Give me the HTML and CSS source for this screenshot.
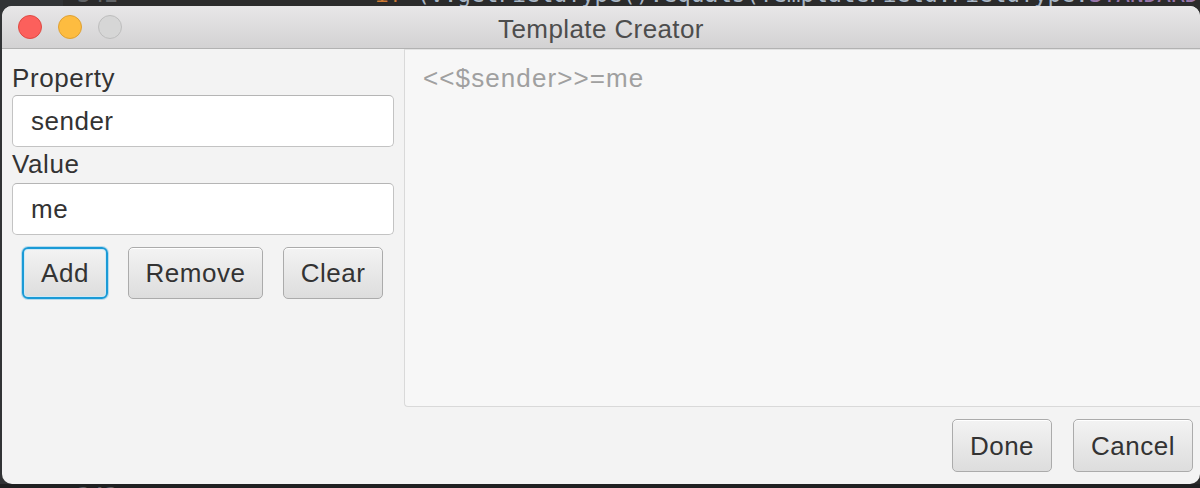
FILE: index.html
```html
<!DOCTYPE html>
<html lang="en">
<head>
<meta charset="utf-8">
<title>Template Creator</title>
<link rel="stylesheet" href="styles.css">
</head>
<body>
<div class="editor" aria-hidden="true">
  <div class="gutter"></div>
  <div class="code-top"><span class="ln">342</span><span class="kw">if</span> <span class="code">(v.getFieldType().equals(TemplateField.FieldType.</span><span class="const">STANDARD</span></div>
  <div class="code-bottom"><span class="ln ln-bottom">343</span></div>
</div>

<div class="window">
  <div class="titlebar">
    <div class="lights">
      <span class="light red"></span>
      <span class="light yellow"></span>
      <span class="light gray"></span>
    </div>
    <div class="title">Template Creator</div>
    <div></div>
  </div>
  <div class="content">
    <div class="left">
      <div class="label">Property</div>
      <div class="field">sender</div>
      <div class="label label-second">Value</div>
      <div class="field field-second">me</div>
      <div class="actions">
        <button class="btn btn-add">Add</button>
        <button class="btn btn-remove">Remove</button>
        <button class="btn btn-clear">Clear</button>
      </div>
    </div>
    <div class="right">
      <div class="textarea">&lt;&lt;$sender&gt;&gt;=me</div>
      <div class="footer">
        <button class="btn btn-done">Done</button>
        <button class="btn btn-cancel">Cancel</button>
      </div>
    </div>
  </div>
</div>
</body>
</html>
```

FILE: styles.css
```css
* { box-sizing: border-box; }

html, body {
  margin: 0;
  height: 100%;
}

body {
  position: relative;
  overflow: hidden;
  background: #2b2b2b;
  font-family: "Liberation Sans", Arial, sans-serif;
}

/* background IDE behind the dialog */
.editor {
  position: absolute;
  inset: 0;
  z-index: 0;
}

.gutter {
  position: absolute;
  left: 0;
  top: 0;
  bottom: 0;
  width: 63px;
  background: #313335;
}

.code-top {
  position: absolute;
  top: -18px;
  left: 77px;
  font: 22.8px/24px "DejaVu Sans Mono", monospace;
  white-space: pre;
  color: #a9b7c6;
}

.ln {
  display: inline-block;
  width: 298px;
  color: #606366;
}

.kw { color: #cc7832; }
.const { color: #9876aa; }

.code-bottom {
  position: absolute;
  top: 484px;
  left: 0;
  right: 0;
  bottom: 0;
  background: #1f2021;
  overflow: hidden;
}

.ln-bottom {
  position: relative;
  top: 0;
  left: 77px;
  font: 22.8px/24px "DejaVu Sans Mono", monospace;
}

/* dialog window */
.window {
  position: relative;
  z-index: 1;
  margin: 6px 0 0 2px;
  width: 1198px;
  height: 478px;
  border-radius: 10px;
  overflow: hidden;
  background: #f3f3f3;
  display: flex;
  flex-direction: column;
}

.titlebar {
  height: 43px;
  flex: none;
  display: grid;
  grid-template-columns: 1fr auto 1fr;
  align-items: center;
  background: linear-gradient(#e8e7e8, #d3d2d3);
  border-bottom: 1px solid #b2b2b2;
}

.lights {
  display: flex;
  gap: 16px;
  padding-left: 16px;
  align-items: center;
}

.light {
  width: 24px;
  height: 24px;
  border-radius: 50%;
  border: 1px solid;
}

.red { background: #fc605c; border-color: #de4a43; }
.yellow { background: #fdbc40; border-color: #dea033; }
.gray { background: #d6d6d6; border-color: #bdbdbd; }

.title {
  font-size: 26px;
  line-height: 30px;
  padding-top: 3px;
  color: #4d4d4d;
  letter-spacing: 0.4px;
}

.content {
  flex: 1;
  display: flex;
  min-height: 0;
}

.left {
  width: 402px;
  flex: none;
  display: flex;
  flex-direction: column;
  padding: 14px 10px 0 10px;
}

.label {
  font-size: 26px;
  line-height: 30px;
  color: #333333;
  letter-spacing: 0.6px;
}

.label-second { margin-top: 2px; }

.field {
  margin-top: 2px;
  height: 52px;
  display: flex;
  align-items: center;
  padding: 0 18px;
  background: #ffffff;
  border: 1px solid #c3c3c3;
  border-top-color: #b5b5b5;
  border-radius: 5px;
  font-size: 26px;
  line-height: 30px;
  color: #333333;
  letter-spacing: 0.5px;
}

.field-second { margin-top: 4px; }

.actions {
  display: flex;
  gap: 20px;
  margin-top: 12px;
  padding-left: 10px;
}

.btn {
  height: 52px;
  padding: 0;
  border: 1px solid #ababab;
  border-radius: 5px;
  background: linear-gradient(#f3f3f3, #dddddd);
  box-shadow: inset 0 1px 0 #ffffff;
  font-family: "Liberation Sans", Arial, sans-serif;
  font-size: 26px;
  line-height: 30px;
  color: #333333;
  letter-spacing: 0.5px;
}

.btn-add {
  width: 86px;
  border: 2px solid #1a9ad6;
  border-radius: 6px;
  box-shadow: 0 0 0 1px rgba(110, 190, 230, 0.45), inset 0 0 0 1px #cfe9f6;
}

.btn-remove { width: 135px; }
.btn-clear { width: 100px; }

.right {
  flex: 1;
  display: flex;
  flex-direction: column;
  min-width: 0;
}

.textarea {
  height: 358px;
  flex: none;
  padding: 13px 0 0 18px;
  background: #f7f7f7;
  border-top: 1px solid #e3e3e3;
  border-left: 1px solid #d9d9d9;
  border-bottom: 1px solid #d9d9d9;
  border-bottom-left-radius: 4px;
  font-size: 26px;
  line-height: 30px;
  color: #a0a0a0;
  letter-spacing: 1.1px;
}

.footer {
  flex: 1;
  display: flex;
  justify-content: flex-end;
  align-items: flex-start;
  gap: 21px;
  padding: 12px 7px 0 0;
}

.btn-done { width: 100px; height: 53px; }
.btn-cancel { width: 120px; height: 53px; }
```
